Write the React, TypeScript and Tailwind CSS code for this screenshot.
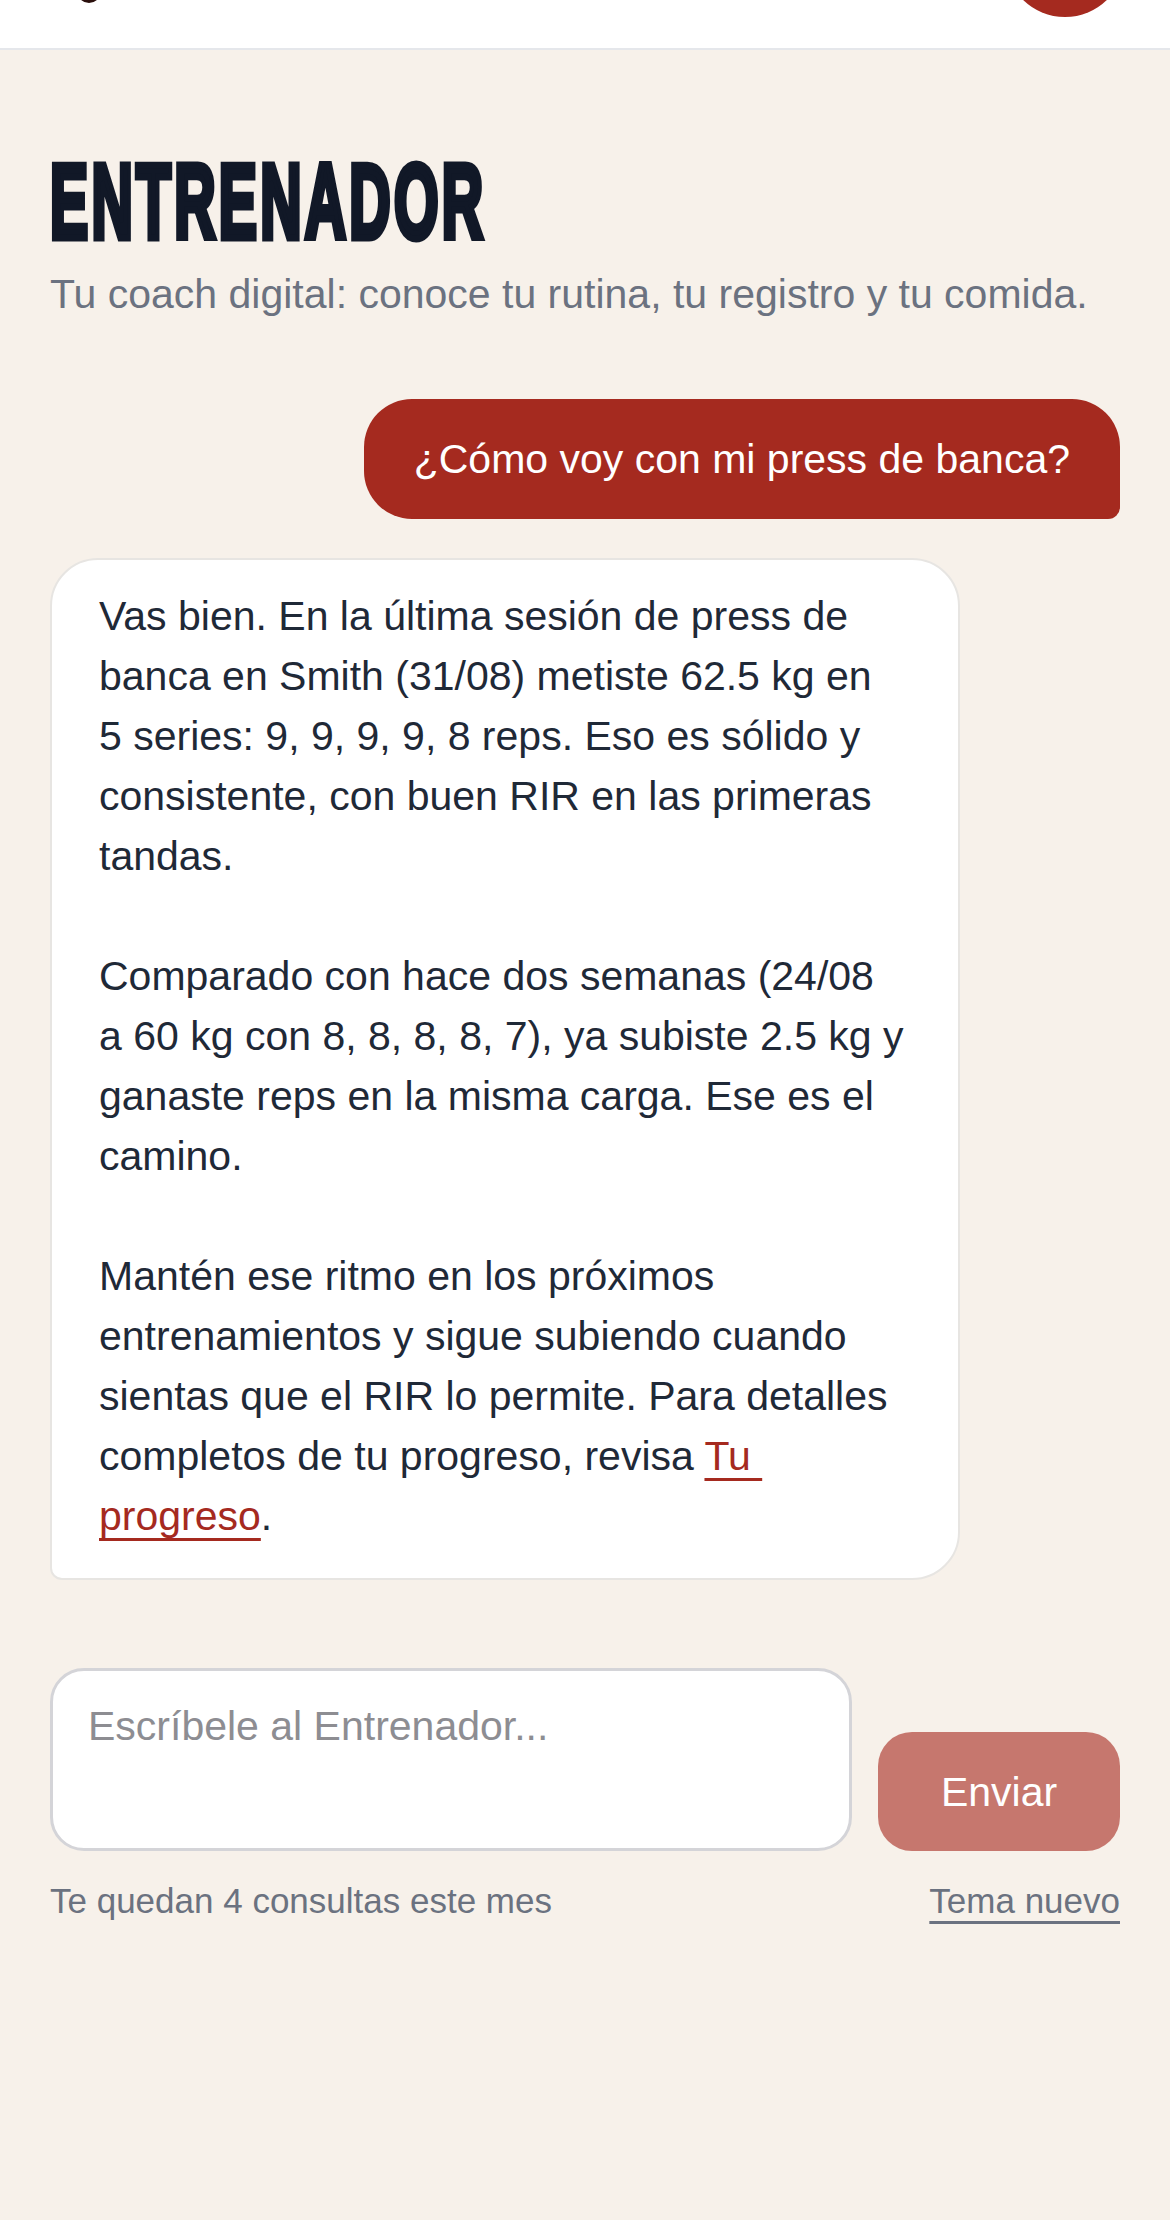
import React from 'react';

const sans = "font-['Liberation_Sans',Arial,sans-serif]";

function Header() {
  return (
    <div className="h-[50px] bg-white border-b-[2px] border-[#e5e7eb] overflow-hidden flex items-start justify-between pl-[77px] pr-[45px]">
      <div className="w-[24px] h-[24px] -mt-[21px] rounded-full bg-[#7a1f17] border-[3px] border-[#2a0f0c]" />
      <div className="w-[120px] h-[120px] -mt-[103px] rounded-full bg-[#a52a1f]" />
    </div>
  );
}

function UserBubble({ text }: { text: string }) {
  return (
    <div className="flex justify-end">
      <div className="bg-[#a52a1f] text-white text-[41px] leading-[60px] px-[50px] py-[30px] rounded-[48px] rounded-br-[12px]">
        {text}
      </div>
    </div>
  );
}

function CoachBubble() {
  return (
    <div className="flex justify-start mt-[39px]">
      <div className="w-[85%] bg-white border-[2px] border-[#e7e5e2] rounded-[48px] rounded-bl-[12px] px-[47px] pt-[26px] pb-[32px] text-[41px] leading-[60px] text-[#1f2937] whitespace-nowrap">
        <p>
          Vas bien. En la última sesión de press de<br />
          banca en Smith (31/08) metiste 62.5 kg en<br />
          5 series: 9, 9, 9, 9, 8 reps. Eso es sólido y<br />
          consistente, con buen RIR en las primeras<br />
          tandas.
        </p>
        <p className="mt-[60px]">
          Comparado con hace dos semanas (24/08<br />
          a 60 kg con 8, 8, 8, 8, 7), ya subiste 2.5 kg y<br />
          ganaste reps en la misma carga. Ese es el<br />
          camino.
        </p>
        <p className="mt-[60px]">
          Mantén ese ritmo en los próximos<br />
          entrenamientos y sigue subiendo cuando<br />
          sientas que el RIR lo permite. Para detalles<br />
          completos de tu progreso, revisa{' '}
          <a
            href="#"
            className="text-[#a52a1f] underline decoration-[3px] underline-offset-[8px] [text-decoration-skip-ink:none]"
          >
            Tu&nbsp;<br />progreso
          </a>
          .
        </p>
      </div>
    </div>
  );
}

export default function App() {
  return (
    <div className={`min-h-[2220px] w-full bg-[#f7f1ea] ${sans}`}>
      <Header />
      <main className="px-[50px] pt-[98px]">
        <h1 className="text-[106px] leading-[106px] font-bold tracking-[6px] text-[#111827] origin-left [transform:scaleX(0.54)] [-webkit-text-stroke:7px_#111827] whitespace-nowrap">
          ENTRENADOR
        </h1>
        <p className="mt-[10px] text-[41px] leading-[60px] text-[#6b7280]">
          Tu coach digital: conoce tu rutina, tu registro y tu comida.
        </p>

        <div className="mt-[75px]">
          <UserBubble text="¿Cómo voy con mi press de banca?" />
          <CoachBubble />
        </div>

        <div className="mt-[88px] flex items-end gap-[26px]">
          <textarea
            placeholder="Escríbele al Entrenador..."
            className={`flex-1 h-[183px] resize-none bg-white border-[3px] border-[#d4d4d8] rounded-[34px] pl-[35px] pr-[30px] pt-[31px] text-[41px] leading-[48px] text-[#1f2937] placeholder:text-[#8d8d92] outline-none ${sans}`}
          />
          <button className="w-[242px] h-[119px] rounded-[34px] bg-[#c6776e] text-white text-[41px] leading-[48px]">
            Enviar
          </button>
        </div>

        <div className="mt-[26px] flex justify-between text-[35px] leading-[48px] text-[#6b7280]">
          <span>Te quedan 4 consultas este mes</span>
          <a href="#" className="underline decoration-[3px] underline-offset-[8px]">
            Tema nuevo
          </a>
        </div>
      </main>
    </div>
  );
}
